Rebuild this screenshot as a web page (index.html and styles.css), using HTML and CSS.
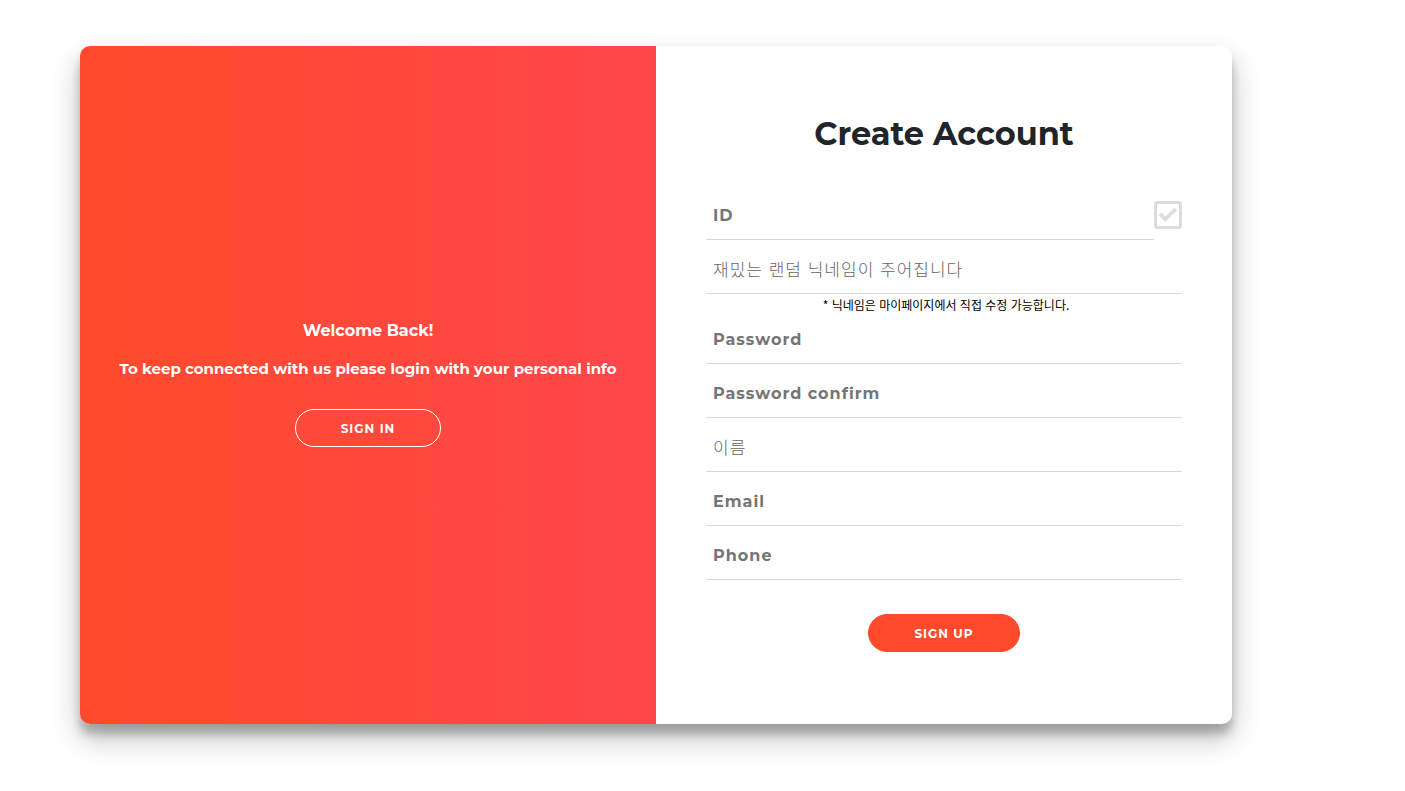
FILE: index.html
```html
<!DOCTYPE html>
<html lang="ko">
<head>
<meta charset="utf-8">
<title>Create Account</title>
<link rel="stylesheet" href="styles.css">
</head>
<body>
<main class="card">
  <section class="welcome">
    <h2 class="welcome-title">Welcome Back!</h2>
    <p class="welcome-text">To keep connected with us please login with your personal info</p>
    <button class="btn btn-ghost" type="button">SIGN IN</button>
  </section>
  <form class="signup">
    <h1 class="signup-title">Create Account</h1>
    <div class="id-row">
      <input class="field" type="text" name="id" aria-label="ID" placeholder="ID">
      <button class="check" type="button" aria-label="ID check">
        <svg class="check-icon" viewBox="0 0 28 28" fill="none" stroke="currentColor" stroke-width="3">
          <rect x="1.5" y="1.5" width="25" height="25" rx="1.5"/>
          <path d="M6.2 13.2l5.2 5L21.8 8.2" stroke-width="3.8"/>
        </svg>
      </button>
    </div>
    <input class="field korean" type="text" name="nickname" aria-label="닉네임" placeholder="재밌는 랜덤 닉네임이 주어집니다">
    <p class="hint">* 닉네임은 마이페이지에서 직접 수정 가능합니다.</p>
    <input class="field" type="password" name="password" aria-label="Password" placeholder="Password">
    <input class="field" type="password" name="confirm" aria-label="Password confirm" placeholder="Password confirm">
    <input class="field korean" type="text" name="name" aria-label="이름" placeholder="이름">
    <input class="field" type="email" name="email" aria-label="Email" placeholder="Email">
    <input class="field" type="tel" name="phone" aria-label="Phone" placeholder="Phone">
    <button class="btn btn-solid" type="submit">SIGN UP</button>
  </form>
</main>
</body>
</html>
```
FILE: styles.css
```css
* {
  box-sizing: border-box;
}

body {
  margin: 0;
  padding: 46px 173px 67px 80px;
  background: #fff;
  color: #212529;
  font-family: Montserrat, "Open Sans", "Noto Sans CJK KR", sans-serif;
}

.card {
  display: grid;
  grid-template-columns: 1fr 1fr;
  overflow: hidden;
  border-radius: 10px;
  background: #fff;
  box-shadow: 0 14px 28px rgba(0, 0, 0, 0.25), 0 10px 10px rgba(0, 0, 0, 0.22);
}

.welcome {
  display: flex;
  flex-direction: column;
  align-items: center;
  justify-content: center;
  padding: 0 24px 2px;
  background: linear-gradient(to right, #ff4b2b, #ff464c);
  color: #fff;
  text-align: center;
}

.welcome-title {
  margin: 0 0 18px;
  font-size: 16px;
  font-weight: 700;
  line-height: 20px;
}

.welcome-text {
  margin: 0 0 30px;
  font-size: 15px;
  font-weight: 700;
  line-height: 20px;
}

.btn {
  height: 38px;
  padding: 0 45px;
  border: 1px solid #ff4b2b;
  border-radius: 20px;
  color: #fff;
  font: inherit;
  font-size: 12px;
  font-weight: 700;
  letter-spacing: 1px;
}

.btn-ghost {
  border-color: #fff;
  background: transparent;
}

.btn-solid {
  align-self: center;
  margin-top: 34px;
  background: #ff4b2b;
}

.signup {
  display: flex;
  flex-direction: column;
  padding: 68px 50px 72px;
}

.signup-title {
  margin: 0 0 32px;
  font-size: 32px;
  font-weight: 700;
  line-height: 40px;
  text-align: center;
}

.id-row {
  display: flex;
}

.field {
  width: 100%;
  height: 54px;
  padding: 6px 7px 0;
  border: 0;
  border-bottom: 1px solid #d9d9d9;
  outline: 0;
  background: transparent;
  font: inherit;
  font-size: 16px;
  font-weight: 700;
  letter-spacing: 1px;
}

.field::placeholder {
  color: #757575;
  opacity: 1;
}

.korean {
  padding-top: 4px;
  font-family: "Noto Sans CJK KR", sans-serif;
  font-size: 17px;
  font-weight: 300;
}

.korean::placeholder {
  color: #666;
}

.check {
  display: flex;
  align-items: center;
  padding: 4px 0 0;
  border: 0;
  background: transparent;
  color: #dcdcdc;
}

.check-icon {
  width: 28px;
  height: 28px;
}

.hint {
  margin: 0;
  padding: 0 0 0 4px;
  color: #000;
  font-family: "Noto Sans CJK KR", sans-serif;
  font-size: 12px;
  font-weight: 400;
  line-height: 16px;
  padding-top: 3px;
  margin-bottom: -3px;
  text-align: center;
}
```
